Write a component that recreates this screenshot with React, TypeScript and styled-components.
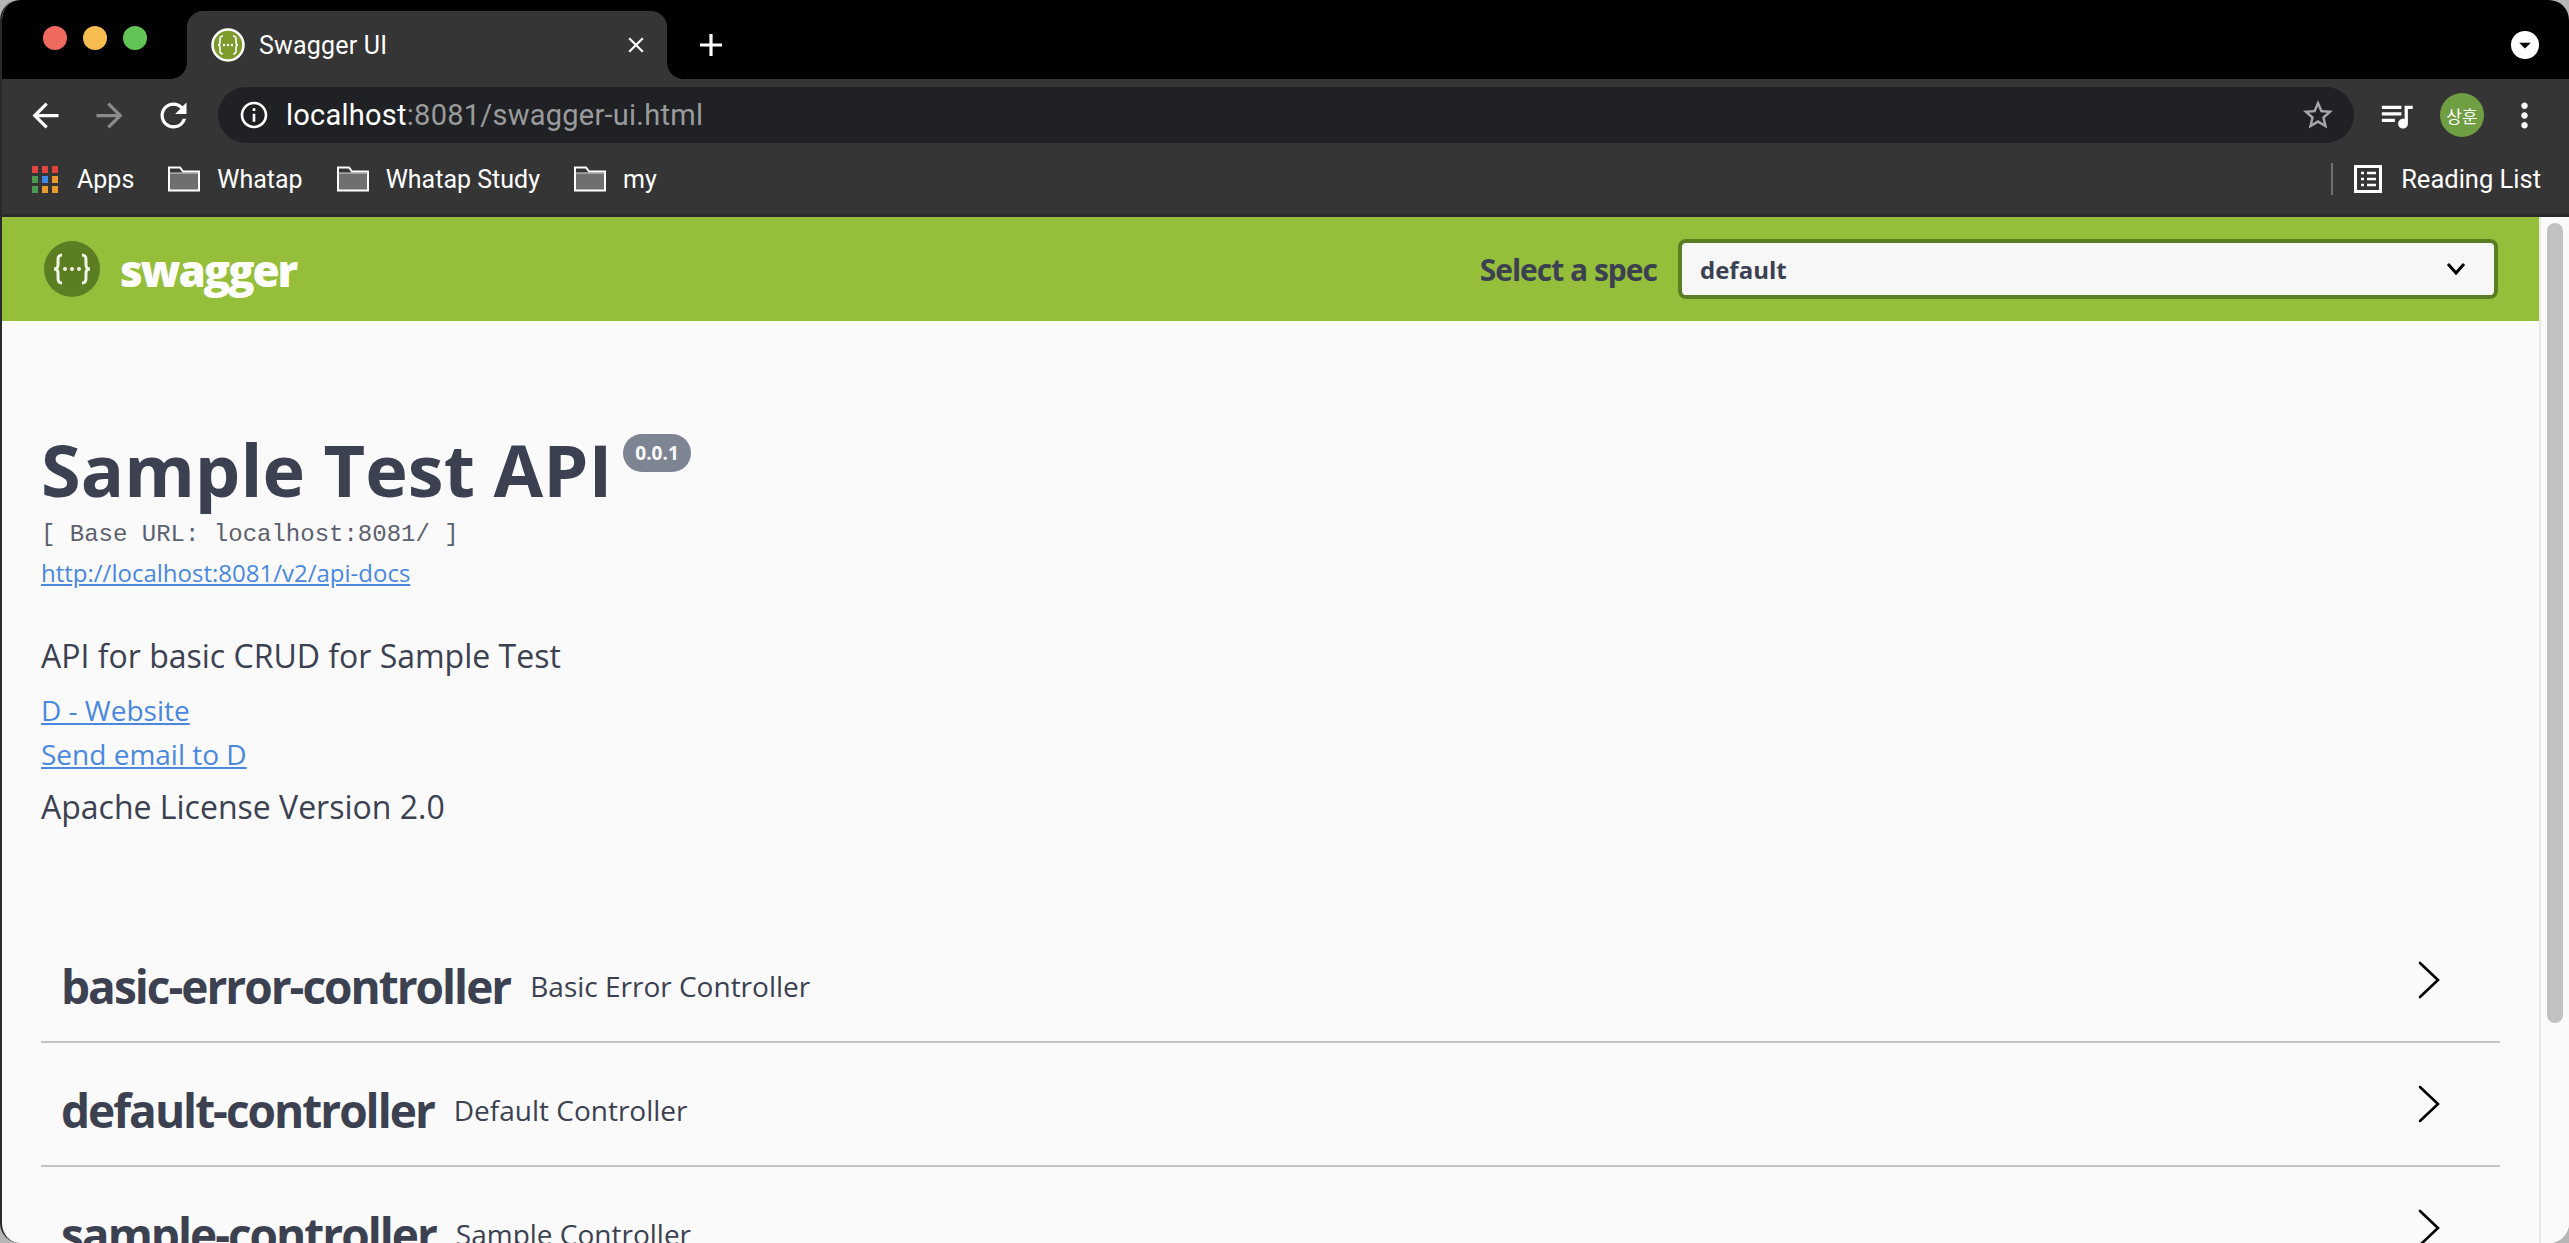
import styled, { createGlobalStyle } from "styled-components";
import {
  MdArrowBack,
  MdArrowForward,
  MdRefresh,
  MdInfoOutline,
  MdStarBorder,
  MdQueueMusic,
  MdMoreVert,
  MdClose,
  MdAdd,
  MdArrowDropDown,
} from "react-icons/md";

const GlobalStyle = createGlobalStyle`
  html, body {
    margin: 0;
    padding: 0;
    height: 100%;
    overflow: hidden;
    background: #b5b5b5;
  }
`;

const Window = styled.div`
  width: 2569px;
  height: 1243px;
  box-sizing: border-box;
  display: flex;
  flex-direction: column;
  overflow: hidden;
  border-radius: 20px;
  border-left: 2px solid #2a2a2a;
  background: #fafafa;
  font-family: "Open Sans", "Liberation Sans", sans-serif;
`;

/* Title bar */
const TitleBar = styled.div`
  height: 79px;
  flex: none;
  background: #000;
  display: flex;
  align-items: flex-end;
  padding-left: 185px;
  padding-right: 30px;
`;

const Lights = styled.div`
  position: absolute;
  top: 26px;
  left: 43px;
  display: flex;
  gap: 16px;
`;

const Light = styled.span<{ $color: string }>`
  width: 24px;
  height: 24px;
  border-radius: 50%;
  background: ${(p) => p.$color};
`;

const Tab = styled.div`
  width: 480px;
  height: 68px;
  box-sizing: border-box;
  background: #353535;
  border-radius: 16px 16px 0 0;
  display: flex;
  align-items: center;
  padding: 0 18px 0 24px;
  color: #fff;
  font-family: Roboto, sans-serif;
  font-size: 25px;
  position: relative;
  &::before,
  &::after {
    content: "";
    position: absolute;
    bottom: 0;
    width: 16px;
    height: 16px;
  }
  &::before {
    left: -16px;
    background: radial-gradient(circle at 0 0, #000 15.5px, #353535 16px);
  }
  &::after {
    right: -16px;
    background: radial-gradient(circle at 100% 0, #000 15.5px, #353535 16px);
  }
`;

const TabTitle = styled.span`
  margin-left: 14px;
  flex: 1;
  letter-spacing: 0.2px;
`;

const NewTab = styled.div`
  color: #fff;
  margin-left: 25px;
  height: 68px;
  display: flex;
  align-items: center;
`;

const TitleSpacer = styled.div`
  flex: 1;
`;

const ProfileBadge = styled.div`
  width: 28px;
  height: 28px;
  border-radius: 50%;
  background: #fff;
  color: #000;
  display: flex;
  align-items: center;
  justify-content: center;
  margin-bottom: 20px;
`;

/* Address toolbar */
const Toolbar = styled.div`
  height: 70px;
  flex: none;
  background: #353535;
  display: flex;
  align-items: center;
  padding: 2px 24px 0 24px;
  box-sizing: border-box;
`;

const NavIcon = styled.div<{ $dim?: boolean; $gap?: number }>`
  width: 39px;
  height: 39px;
  flex: none;
  color: ${(p) => (p.$dim ? "#8a8a8a" : "#fff")};
  margin-right: ${(p) => p.$gap ?? 25}px;
  svg {
    display: block;
  }
`;

const AddressBar = styled.div`
  width: 2136px;
  height: 56px;
  flex: none;
  border-radius: 28px;
  background: #202124;
  display: flex;
  align-items: center;
  padding: 0 18px 0 20px;
  box-sizing: border-box;
  margin-right: 23px;
  color: #fff;
  font-family: Roboto, sans-serif;
  font-size: 29px;
`;

const Url = styled.span`
  margin-left: 16px;
  flex: 1;
  color: #9a9b9d;
  letter-spacing: 0.25px;
  b {
    font-weight: 400;
    color: #fff;
  }
`;

const Avatar = styled.div`
  width: 44px;
  height: 44px;
  flex: none;
  border-radius: 50%;
  background: #6f9e43;
  color: #fff;
  font-family: "Noto Sans CJK KR", sans-serif;
  font-size: 17px;
  display: flex;
  align-items: center;
  justify-content: center;
  margin: 0 21px 0 24px;
`;

/* Bookmarks */
const Bookmarks = styled.div`
  height: 68px;
  flex: none;
  box-sizing: border-box;
  background: #353535;
  border-bottom: 3px solid #2b2b2b;
  display: flex;
  align-items: center;
  padding: 0 28px 5px 30px;
  color: #fff;
  font-family: Roboto, sans-serif;
  font-size: 25px;
`;

const Bookmark = styled.div`
  display: flex;
  align-items: center;
  gap: 17px;
  margin-right: 34px;
`;

const ReadingItem = styled(Bookmark)`
  gap: 19px;
  margin-right: 0;
  font-size: 25.5px;
`;

const AppsGrid = styled.div`
  display: grid;
  grid-template-columns: repeat(3, 6px);
  grid-auto-rows: 7px;
  gap: 3px 4px;
  margin-right: 2px;
`;

const AppsDot = styled.span<{ $color: string }>`
  background: ${(p) => p.$color};
`;

const BookmarkSpacer = styled.div`
  flex: 1;
`;

const Separator = styled.div`
  width: 2px;
  height: 32px;
  background: #6f6f6f;
  margin-right: 21px;
`;

/* Page area */
const Viewport = styled.div`
  flex: 1;
  min-height: 0;
  display: flex;
`;

const Page = styled.div`
  flex: 1;
  min-width: 0;
`;

const Scrollbar = styled.div`
  width: 30px;
  flex: none;
  box-sizing: border-box;
  border-left: 2px solid #e8e8e8;
  background: #fafafa;
  padding: 6px 6px 0 6px;
`;

const ScrollThumb = styled.div`
  height: 800px;
  border-radius: 8px;
  background: #c1c1c1;
`;

const Topbar = styled.div`
  height: 104px;
  background: #95be3a;
  display: flex;
  align-items: center;
  padding: 0 41px 0 42px;
  box-sizing: border-box;
`;

const Brand = styled.div`
  display: flex;
  align-items: center;
  flex: 1;
  gap: 20px;
  color: #fff;
  font-size: 44px;
  font-weight: 800;
  font-family: "Open Sans", sans-serif;
`;

const BrandName = styled.span`
  letter-spacing: -2.2px;
  line-height: 56px;
  padding-top: 2px;
`;

const SpecLabel = styled.span`
  font-family: "Open Sans", sans-serif;
  font-weight: 700;
  font-size: 30px;
  color: #3b4151;
  margin-right: 21px;
  letter-spacing: -1px;
`;

const SpecSelect = styled.div`
  width: 820px;
  height: 60px;
  box-sizing: border-box;
  border: 4px solid #5b7e23;
  border-radius: 8px;
  background: #f7f7f7;
  display: flex;
  align-items: center;
  justify-content: space-between;
  padding: 0 28px 0 18px;
  font-weight: 700;
  font-size: 24px;
  color: #3b4151;
`;

const Info = styled.section`
  margin: 103px 0 0 0;
  padding: 0 39px;
  color: #3b4151;
`;

const Title = styled.h2`
  margin: 0;
  font-size: 72px;
  line-height: 90px;
  font-weight: 700;
  color: #3b4151;
  display: flex;
  align-items: flex-start;
`;

const Version = styled.span`
  margin: 10px 0 0 11px;
  height: 38px;
  line-height: 38px;
  padding: 0 12px;
  border-radius: 20px;
  background: #7d8492;
  color: #fafafa;
  font-size: 19px;
  font-weight: 700;
`;

const BaseUrl = styled.div`
  font-family: "Liberation Mono", monospace;
  font-size: 24px;
  line-height: 32px;
  margin-top: 5px;
  color: #5c616e;
`;

const DocLink = styled.a`
  display: block;
  font-size: 24px;
  line-height: 44px;
  color: #4a88e0;
  text-decoration: underline;
`;

const Description = styled.p`
  font-size: 32px;
  line-height: 46px;
  margin: 38px 0 9px;
`;

const ContactLink = styled.a`
  display: block;
  font-size: 28px;
  line-height: 44px;
  color: #4a88e0;
  text-decoration: underline;
`;

const License = styled.div`
  font-size: 32px;
  line-height: 58px;
  margin-top: 2px;
`;

const Tags = styled.div`
  margin-top: 83px;
  padding: 0 39px;
`;

const TagRow = styled.div`
  height: 124px;
  box-sizing: border-box;
  border-bottom: 2px solid #c4c4c8;
  display: flex;
  align-items: center;
  padding: 0 59px 0 20px;
  color: #3b4151;
`;

const TagName = styled.span`
  font-family: "Open Sans", sans-serif;
  font-size: 46px;
  font-weight: 700;
  letter-spacing: -2px;
  margin-top: 12px;
`;

const TagDescription = styled.span`
  font-size: 28px;
  margin: 12px 0 0 20px;
  flex: 1;
`;

const tags = [
  { name: "basic-error-controller", description: "Basic Error Controller" },
  { name: "default-controller", description: "Default Controller" },
  { name: "sample-controller", description: "Sample Controller" },
];

const appColors = [
  "#e0433a", "#e0433a", "#e0433a",
  "#4c9a52", "#3f87e5", "#e89a2f",
  "#4c9a52", "#e89a2f", "#e89a2f",
];

const Favicon = () => (
  <svg width="34" height="34" viewBox="0 0 34 34">
    <circle cx="17" cy="17" r="15.5" fill="#7d9a2d" stroke="#fff" strokeWidth="2.5" />
    <path
      d="M12 8c-2 0-3 1-3 3v3c0 2-1 3-2 3 1 0 2 1 2 3v3c0 2 1 3 3 3M22 8c2 0 3 1 3 3v3c0 2 1 3 2 3-1 0-2 1-2 3v3c0 2-1 3-3 3"
      fill="none"
      stroke="#fff"
      strokeWidth="1.6"
    />
    <circle cx="13" cy="17" r="1.2" fill="#fff" />
    <circle cx="17" cy="17" r="1.2" fill="#fff" />
    <circle cx="21" cy="17" r="1.2" fill="#fff" />
  </svg>
);

const SwaggerLogo = () => (
  <svg width="56" height="56" viewBox="0 0 56 56">
    <circle cx="28" cy="28" r="28" fill="#5b7e23" />
    <path
      d="M18 14c-4 0-4 3-4 6v4c0 2-1 4-4 4 3 0 4 2 4 4v4c0 3 0 6 4 6M38 14c4 0 4 3 4 6v4c0 2 1 4 4 4-3 0-4 2-4 4v4c0 3 0 6-4 6"
      fill="none"
      stroke="#f0f4e4"
      strokeWidth="3"
    />
    <circle cx="21" cy="28" r="2" fill="#f0f4e4" />
    <circle cx="28" cy="28" r="2" fill="#f0f4e4" />
    <circle cx="35" cy="28" r="2" fill="#f0f4e4" />
  </svg>
);

const FolderIcon = () => (
  <svg width="32" height="26" viewBox="0 0 32 26">
    <rect x="1" y="7" width="30" height="17" fill="#6f6f6f" />
    <path d="M1 24.5V1.5h11l3 4h16v19z" fill="none" stroke="#fff" strokeWidth="2" />
    <path d="M1 7h30" stroke="#d8d8d8" strokeWidth="1" />
  </svg>
);

const ReadingIcon = () => (
  <svg width="28" height="28" viewBox="0 0 28 28">
    <rect x="1.5" y="1.5" width="25" height="25" fill="none" stroke="#fff" strokeWidth="3" />
    <path
      d="M7 8h3M13 8h9M7 14h3M13 14h9M7 20h3M13 20h9"
      stroke="#fff"
      strokeWidth="2.5"
    />
  </svg>
);

const Chevron = () => (
  <svg width="24" height="38" viewBox="0 0 24 38">
    <path d="M3 2l18 17L3 36" fill="none" stroke="#000" strokeWidth="2.6" strokeLinecap="round" />
  </svg>
);

const App = () => {
  return (
    <Window>
      <GlobalStyle />

      {/* Tab strip */}
      <TitleBar>
        <Lights>
          <Light $color="#ee6a5f" />
          <Light $color="#f5bd4f" />
          <Light $color="#61c454" />
        </Lights>
        <Tab>
          <Favicon />
          <TabTitle>Swagger UI</TabTitle>
          <MdClose size={26} />
        </Tab>
        <NewTab>
          <MdAdd size={38} />
        </NewTab>
        <TitleSpacer />
        <ProfileBadge>
          <MdArrowDropDown size={34} />
        </ProfileBadge>
      </TitleBar>

      {/* Address bar */}
      <Toolbar>
        <NavIcon>
          <MdArrowBack size={39} />
        </NavIcon>
        <NavIcon $dim>
          <MdArrowForward size={39} />
        </NavIcon>
        <NavIcon>
          <MdRefresh size={39} />
        </NavIcon>
        <AddressBar>
          <MdInfoOutline size={32} />
          <Url>
            <b>localhost</b>:8081/swagger-ui.html
          </Url>
          <MdStarBorder size={36} color="#a6a7a9" />
        </AddressBar>
        <NavIcon $gap={0}>
          <MdQueueMusic size={39} />
        </NavIcon>
        <Avatar>상훈</Avatar>
        <NavIcon $gap={0}>
          <MdMoreVert size={39} />
        </NavIcon>
      </Toolbar>

      {/* Bookmarks bar */}
      <Bookmarks>
        <Bookmark>
          <AppsGrid>
            {appColors.map((color, i) => (
              <AppsDot key={i} $color={color} />
            ))}
          </AppsGrid>
          Apps
        </Bookmark>
        <Bookmark>
          <FolderIcon />
          Whatap
        </Bookmark>
        <Bookmark>
          <FolderIcon />
          Whatap Study
        </Bookmark>
        <Bookmark>
          <FolderIcon />
          my
        </Bookmark>
        <BookmarkSpacer />
        <Separator />
        <ReadingItem>
          <ReadingIcon />
          Reading List
        </ReadingItem>
      </Bookmarks>

      {/* Swagger page */}
      <Viewport>
        <Page>
          <Topbar>
            <Brand>
              <SwaggerLogo />
              <BrandName>swagger</BrandName>
            </Brand>
            <SpecLabel>Select a spec</SpecLabel>
            <SpecSelect>
              default
              <svg width="20" height="14" viewBox="0 0 20 14">
                <path d="M2 2l8 9 8-9" fill="none" stroke="#000" strokeWidth="3" />
              </svg>
            </SpecSelect>
          </Topbar>

          <Info>
            <Title>
              Sample Test API
              <Version>0.0.1</Version>
            </Title>
            <BaseUrl>[ Base URL: localhost:8081/ ]</BaseUrl>
            <DocLink>http://localhost:8081/v2/api-docs</DocLink>
            <Description>API for basic CRUD for Sample Test</Description>
            <ContactLink>D - Website</ContactLink>
            <ContactLink>Send email to D</ContactLink>
            <License>Apache License Version 2.0</License>
          </Info>

          <Tags>
            {tags.map((tag) => (
              <TagRow key={tag.name}>
                <TagName>{tag.name}</TagName>
                <TagDescription>{tag.description}</TagDescription>
                <Chevron />
              </TagRow>
            ))}
          </Tags>
        </Page>
        <Scrollbar>
          <ScrollThumb />
        </Scrollbar>
      </Viewport>
    </Window>
  );
};

export default App;
